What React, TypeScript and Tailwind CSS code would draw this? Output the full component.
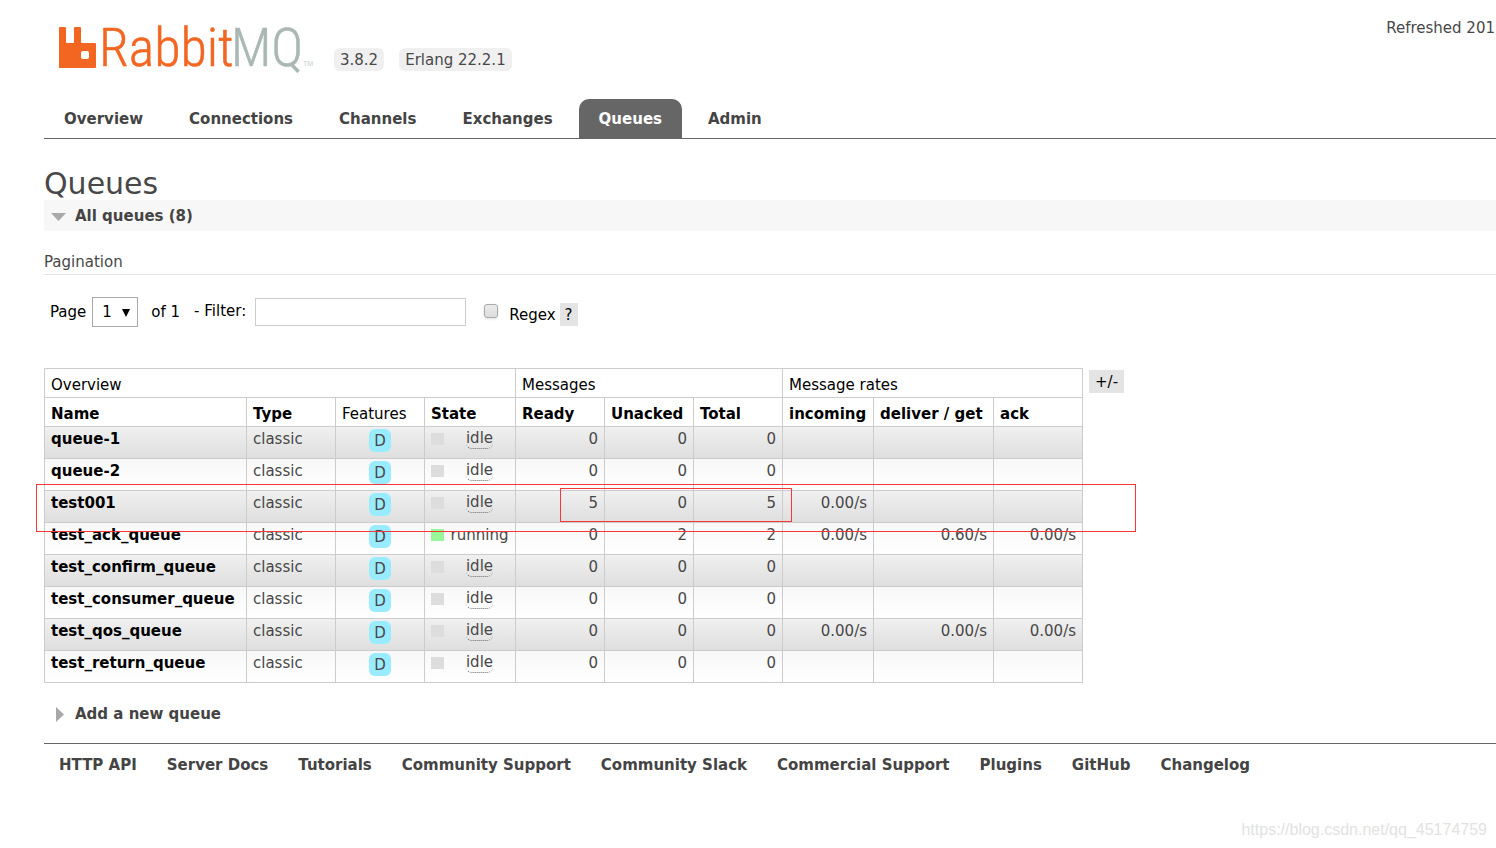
import { useState } from "react";

type Queue = {
  name: string;
  state: "idle" | "running";
  ready: number;
  unacked: number;
  total: number;
  incoming?: string;
  deliver?: string;
  ack?: string;
};

const tabs = ["Overview", "Connections", "Channels", "Exchanges", "Queues", "Admin"];

const queues: Queue[] = [
  { name: "queue-1", state: "idle", ready: 0, unacked: 0, total: 0 },
  { name: "queue-2", state: "idle", ready: 0, unacked: 0, total: 0 },
  { name: "test001", state: "idle", ready: 5, unacked: 0, total: 5, incoming: "0.00/s" },
  {
    name: "test_ack_queue",
    state: "running",
    ready: 0,
    unacked: 2,
    total: 2,
    incoming: "0.00/s",
    deliver: "0.60/s",
    ack: "0.00/s",
  },
  { name: "test_confirm_queue", state: "idle", ready: 0, unacked: 0, total: 0 },
  { name: "test_consumer_queue", state: "idle", ready: 0, unacked: 0, total: 0 },
  {
    name: "test_qos_queue",
    state: "idle",
    ready: 0,
    unacked: 0,
    total: 0,
    incoming: "0.00/s",
    deliver: "0.00/s",
    ack: "0.00/s",
  },
  { name: "test_return_queue", state: "idle", ready: 0, unacked: 0, total: 0 },
];

const footerLinks = [
  "HTTP API",
  "Server Docs",
  "Tutorials",
  "Community Support",
  "Community Slack",
  "Commercial Support",
  "Plugins",
  "GitHub",
  "Changelog",
];

const sortable = ["Ready", "Unacked", "Total", "incoming", "deliver / get", "ack"];

function Logo() {
  return (
    <svg
      width="256"
      height="48"
      viewBox="0 0 256 48"
      role="img"
      aria-label="RabbitMQ"
      className="overflow-visible"
    >
      <path
        fill="#f36621"
        fillRule="evenodd"
        d="M1 3h5q1 0 1 1v14q0 1 1 1h6q1 0 1-1V4q0-1 1-1h5q1 0 1 1v14q0 1 1 1h13q1 0 1 1v23q0 1-1 1H0V4q0-1 1-1zM24 27q-2 0-2 2v4q0 2 2 2h4q2 0 2-2v-4q0-2-2-2z"
      />
      <text
        x="40"
        y="42"
        className="fill-[#f36621] stroke-[#f36621] font-['Roboto_Condensed','Liberation_Sans_Narrow',sans-serif] text-[54px] font-light"
        strokeWidth="0.5"
      >
        Rabbit
      </text>
      <text
        x="172"
        y="42"
        className="fill-[#a9b8b3] stroke-[#a9b8b3] font-['Roboto_Condensed','Liberation_Sans_Narrow',sans-serif] text-[54px] font-light"
        strokeWidth="0.5"
      >
        MQ
      </text>
      <text x="244" y="42" className="fill-[#c3cdca] font-['Liberation_Sans',sans-serif] text-[7px]">
        TM
      </text>
    </svg>
  );
}

function Header() {
  const [active, setActive] = useState("Queues");

  return (
    <header className="border-b border-[#666]">
      <div className="flex h-[99px] items-start justify-between">
        <div className="flex items-start pt-6 pl-[15px]">
          <Logo />
          <div className="flex gap-[15px] pt-6 pl-[19px]">
            <span className="rounded-md bg-[#f0f0f0] px-1.5 pt-0.5 leading-[21px]">3.8.2</span>
            <span className="rounded-md bg-[#f0f0f0] px-1.5 pt-0.5 leading-[21px]">
              Erlang 22.2.1
            </span>
          </div>
        </div>
        <p className="pt-[18px] pr-px leading-5 whitespace-nowrap">Refreshed 201</p>
      </div>
      <nav className="flex gap-1.5">
        {tabs.map((tab) => (
          <a
            key={tab}
            href="#"
            onClick={() => setActive(tab)}
            className={`rounded-t-[10px] px-5 pt-0.5 leading-[37px] font-bold ${
              tab === active ? "bg-[#666] text-white" : "text-[#444]"
            }`}
          >
            {tab}
          </a>
        ))}
      </nav>
    </header>
  );
}

function Pagination() {
  return (
    <section className="mt-[21px]">
      <h3 className="border-b border-[#e4e4e4] pb-px leading-[21px]">Pagination</h3>
      <div className="flex items-center pt-[22px] pl-1.5 text-black">
        <label htmlFor="page">Page</label>
        <div className="relative ml-1.5">
          <select
            id="page"
            className="h-[30px] w-[46px] appearance-none border border-[#aaa] bg-white pl-[9px]"
          >
            <option>1</option>
          </select>
          <svg
            width="8"
            height="8"
            viewBox="0 0 8 8"
            className="pointer-events-none absolute top-3 right-2"
          >
            <path d="M0 0h8L4 8z" />
          </svg>
        </div>
        <span className="ml-[13px]">of 1</span>
        <label htmlFor="filter" className="ml-[14px] pb-0.5">
          - Filter:
        </label>
        <input
          id="filter"
          type="text"
          className="ml-[9px] h-7 w-[211px] border border-[#ccc] px-1 outline-none"
        />
        <input
          id="regex"
          type="checkbox"
          className="mb-0.5 ml-[18px] size-[14px] appearance-none rounded-[3px] border border-[#aaa] bg-linear-to-b from-[#ececec] to-[#dcdcdc] shadow-sm"
        />
        <label htmlFor="regex" className="ml-[11px] pt-1.5">
          Regex
        </label>
        <button className="mt-1 ml-1 bg-[#e4e4e4] px-[5px] pt-0.5 leading-[21px]">?</button>
      </div>
    </section>
  );
}

function StateCell({ state }: { state: Queue["state"] }) {
  return (
    <div className="flex items-center">
      <span className={`h-3 w-[13px] ${state === "running" ? "bg-[#98f898]" : "bg-[#ddd]"}`} />
      <span className="flex flex-1 justify-center pl-1.5">
        {state === "idle" ? (
          <abbr className="rounded-md border-b border-dotted border-[#666] leading-[19px] no-underline">
            idle
          </abbr>
        ) : (
          "running"
        )}
      </span>
    </div>
  );
}

function QueueTable() {
  return (
    <div className="relative mt-[41px] flex items-start">
      <table className="w-[1039px] table-fixed border-collapse leading-5 [&_td]:h-8 [&_td]:border [&_td]:border-[#ccc] [&_td]:px-1.5 [&_td]:pt-0.5 [&_td]:align-top [&_th]:h-[29px] [&_th]:border [&_th]:border-[#ccc] [&_th]:px-1.5 [&_th]:pt-1 [&_th]:text-left [&_th]:whitespace-nowrap">
        <colgroup>
          <col className="w-[202px]" />
          <col className="w-[89px]" />
          <col className="w-[89px]" />
          <col className="w-[91px]" />
          <col className="w-[89px]" />
          <col className="w-[89px]" />
          <col className="w-[89px]" />
          <col className="w-[91px]" />
          <col className="w-[120px]" />
          <col className="w-[89px]" />
        </colgroup>
        <thead className="text-black">
          <tr className="[&_th]:font-normal">
            <th colSpan={4}>Overview</th>
            <th colSpan={3}>Messages</th>
            <th colSpan={3}>Message rates</th>
          </tr>
          <tr>
            <th>Name</th>
            <th>Type</th>
            <th className="font-normal">Features</th>
            <th>State</th>
            {sortable.map((name) => (
              <th key={name}>{name}</th>
            ))}
          </tr>
        </thead>
        <tbody>
          {queues.map((q) => (
            <tr
              key={q.name}
              className="bg-linear-to-b odd:from-[#f0f0f0] odd:to-[#dedede] even:from-[#f8f8f8] even:to-white"
            >
              <td>
                <a href="#" className="font-bold whitespace-nowrap text-black">
                  {q.name}
                </a>
              </td>
              <td>classic</td>
              <td className="text-center">
                <abbr className="inline-block rounded-md bg-[#99ebff] px-[5px] pt-0.5 leading-[21px] no-underline">
                  D
                </abbr>
              </td>
              <td>
                <StateCell state={q.state} />
              </td>
              <td className="text-right">{q.ready}</td>
              <td className="text-right">{q.unacked}</td>
              <td className="text-right">{q.total}</td>
              <td className="text-right">{q.incoming}</td>
              <td className="text-right">{q.deliver}</td>
              <td className="text-right">{q.ack}</td>
            </tr>
          ))}
        </tbody>
      </table>
      <button className="mt-0.5 ml-1.5 bg-[#e4e4e4] px-1.5 pt-0.5 leading-[21px] text-black">
        +/-
      </button>

      {/* highlight boxes around the test001 row */}
      <div className="pointer-events-none absolute top-[116px] -left-2 h-12 w-[1100px] border border-[#f83838]" />
      <div className="pointer-events-none absolute top-[120px] left-[516px] h-[34px] w-[232px] border border-[#f83838]" />
    </div>
  );
}

export default function App() {
  return (
    <div className="relative overflow-hidden bg-white pb-[73px] pl-11 font-['DejaVu_Sans',sans-serif] text-[15px] text-[#484848]">
      <Header />
      <main>
        <h1 className="mt-[29px] text-[30px] leading-8">Queues</h1>
        <h2>
          <button className="flex w-full items-center bg-[#f7f7f7] pt-0.5 pl-[7px] leading-[29px] font-bold text-[#444]">
            <svg width="15" height="8" viewBox="0 0 15 8" className="mr-[9px]">
              <path d="M0 0h15L7.500 8z" fill="#a8a8a8" />
            </svg>
            All queues (8)
          </button>
        </h2>
        <Pagination />
        <QueueTable />
        <h2 className="mt-[15px]">
          <button className="flex items-center pt-0.5 pl-3 leading-[29px] font-bold text-[#444]">
            <svg width="8" height="15" viewBox="0 0 8 15" className="mr-[11px]">
              <path d="M0 0v15L8 7.500z" fill="#a8a8a8" />
            </svg>
            Add a new queue
          </button>
        </h2>
      </main>
      <footer className="mt-[14px] flex gap-[30px] border-t border-[#666] pt-[11px] pl-[15px]">
        {footerLinks.map((link) => (
          <a key={link} href="#" className="leading-5 font-bold whitespace-nowrap text-[#444]">
            {link}
          </a>
        ))}
      </footer>
      <p className="absolute right-[9px] bottom-2 font-['Liberation_Sans',sans-serif] text-base leading-5 text-[#e2e2e2]">
        https://blog.csdn.net/qq_45174759
      </p>
    </div>
  );
}
